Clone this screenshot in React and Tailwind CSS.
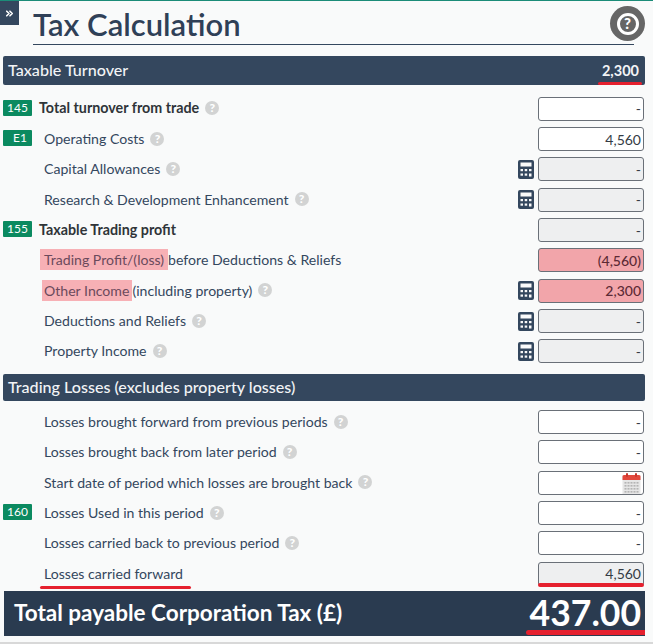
import React from 'react';
import { ChevronsRight } from 'lucide-react';

const Help = () => (
  <span className="inline-flex h-[14px] w-[14px] shrink-0 items-center justify-center rounded-full bg-[#d2d3d3] text-[12px] font-black leading-none text-white">?</span>
);

const Calc = () => (
  <svg width="16" height="19" viewBox="0 0 16 19" className="shrink-0">
    <rect x="0" y="0" width="16" height="19" rx="2" fill="#34475e" />
    <rect x="2.5" y="2.5" width="11" height="4" fill="#fafafa" />
    <g fill="#fafafa">
      <rect x="2.5" y="9" width="2.5" height="2.2" />
      <rect x="6.7" y="9" width="2.5" height="2.2" />
      <rect x="11" y="9" width="2.5" height="2.2" />
      <rect x="2.5" y="13.5" width="2.5" height="2.2" />
      <rect x="6.7" y="13.5" width="2.5" height="2.2" />
      <rect x="11" y="13.5" width="2.5" height="3" />
    </g>
  </svg>
);

const CalendarIcon = () => (
  <svg width="19" height="21" viewBox="0 0 19 21" className="absolute right-[2px] top-[1px]">
    <rect x="0.5" y="2" width="18" height="19" fill="#e6e6e6" />
    <path d="M0.5 3.5 a1.5 1.5 0 0 1 1.5 -1.5 h15 a1.5 1.5 0 0 1 1.5 1.5 V7 H0.5 Z" fill="#e2483d" />
    <rect x="4" y="0" width="2" height="4" rx="1" fill="#c9372c" />
    <rect x="13" y="0" width="2" height="4" rx="1" fill="#c9372c" />
    <g fill="#b4b4b4">
      {[9, 12, 15, 18].map(y => [2.5, 5.5, 8.5, 11.5, 14.5].map(x => (
        <rect key={`${x}-${y}`} x={x} y={y} width="2" height="1.6" />
      )))}
    </g>
  </svg>
);

const Field = ({ value, tone = 'white', calendar, underline }) => {
  const tones = {
    white: 'bg-white text-[#343b44]',
    grey: 'bg-[#eeeff0] text-[#343b44]',
    red: 'bg-[#f2a5aa] font-medium text-[#5c2a35]',
  };
  return (
    <div className={`relative flex h-[24px] w-[106px] items-center justify-end rounded-[3px] border border-[#6a7078] pr-[2px] text-[14px] ${tones[tone]}`}>
      {value}
      {calendar && <CalendarIcon />}
      {underline && <div className="absolute -bottom-[2px] -left-[1px] -right-[1px] h-[4px] rounded-[2px] bg-[#e5202e]" />}
    </div>
  );
};

const Badge = ({ children, right }) => (
  <span className={`flex h-[16px] w-[29px] shrink-0 items-center rounded-[1px] bg-[#0b8a60] text-[12px] text-white ${right ? 'justify-end pr-[5px]' : 'justify-center'}`}>
    {children}
  </span>
);

const Row = ({ badge, badgeRight, bold, label, mark, markWide, help = true, calc, value, tone, calendar, underline, underlineLabel }) => (
  <div className="flex h-[30.35px] items-center">
    <div className="mb-[2px] w-[29px] shrink-0">{badge && <Badge right={badgeRight}>{badge}</Badge>}</div>
    <div className={`relative mb-[1px] flex min-w-0 flex-1 items-center gap-[6px] ${bold ? 'ml-[7px] text-[14.3px] font-bold text-[#2f3438]' : 'ml-[12px] text-[14.1px] text-[#34475e]'}`}>
      <span className="whitespace-nowrap">
        {mark && (
          <span className={`bg-[#f7b0b5] py-[2px] text-[#6b4a5c] ${markWide ? '-ml-[4px] pl-[4px] pr-[4px]' : '-ml-[2px] pl-[2px] pr-[3px]'}`}>{mark}</span>
        )}
        {label}
      </span>
      {help && <Help />}
      {underlineLabel && <div className="absolute -bottom-[5px] -left-[4px] h-[3px] w-[151px] rounded-full bg-[#e5202e]" />}
    </div>
    <div className="mr-[4px] flex items-center">{calc && <Calc />}</div>
    <div className="shrink-0"><Field value={value} tone={tone} calendar={calendar} underline={underline} /></div>
  </div>
);

const SectionBar = ({ title, children, className }) => (
  <div className={`relative flex items-center justify-between rounded-[2px] bg-[#34475e] pl-[5px] pr-[6px] text-[16.1px] font-medium text-[#f2f4f6] ${className}`}>
    <span>{title}</span>
    {children}
  </div>
);

export default function App() {
  return (
    <div className="relative h-[644px] w-[653px] overflow-hidden border-t border-[#1b8c78] bg-[#f9fafa] font-['Lato',sans-serif]">
      <div className="absolute left-0 top-0 flex h-[24px] w-[19px] items-center justify-center bg-[#34475e] text-white">
        <ChevronsRight size={11} strokeWidth={3.5} />
      </div>

      <div className="ml-[33px] mr-[19px] flex h-[44px] items-end justify-between border-b-[1.5px] border-[#34475e]">
        <h1 className="text-[31px] font-semibold leading-[40px] text-[#2f4057]">Tax Calculation</h1>
      </div>
      <div className="absolute right-[8px] top-[5px] flex h-[35px] w-[35px] items-center justify-center rounded-full bg-[#666666]">
        <span className="flex h-[22px] w-[22px] items-center justify-center rounded-full border-[3px] border-white text-[15px] font-black leading-none text-white">?</span>
      </div>

      <div className="ml-[3px] mr-[8px] mt-[11px]">
        <SectionBar title="Taxable Turnover" className="h-[29px]">
          <span className="text-[14.5px] font-bold">2,300</span>
          <div className="absolute bottom-0 right-[3px] h-[3px] w-[44px] rounded-full bg-[#e5202e]" />
        </SectionBar>

        <div className="mt-[8.5px] pr-[1px]">
          <Row badge="145" bold label="Total turnover from trade" value="-" />
          <Row badge="E1" badgeRight label="Operating Costs" value="4,560" />
          <Row label="Capital Allowances" calc value="-" tone="grey" />
          <Row label="Research & Development Enhancement" calc value="-" tone="grey" />
          <Row badge="155" bold label="Taxable Trading profit" help={false} value="-" tone="grey" />
          <Row mark="Trading Profit/(loss)" markWide label="before Deductions & Reliefs" help={false} value="(4,560)" tone="red" />
          <Row mark="Other Income" label="(including property)" calc value="2,300" tone="red" />
          <Row label="Deductions and Reliefs" calc value="-" tone="grey" />
          <Row label="Property Income" calc value="-" tone="grey" />
        </div>

        <SectionBar title="Trading Losses (excludes property losses)" className="mt-[7.35px] h-[27px]" />

        <div className="mt-[6px] pr-[1px]">
          <Row label="Losses brought forward from previous periods" value="-" />
          <Row label="Losses brought back from later period" value="-" />
          <Row label="Start date of period which losses are brought back" calendar />
          <Row badge="160" label="Losses Used in this period" value="-" />
          <Row label="Losses carried back to previous period" value="-" />
          <Row label="Losses carried forward" help={false} underlineLabel value="4,560" tone="grey" underline />
        </div>

        <div className="relative ml-[1px] mt-[2px] flex h-[45px] items-center justify-between bg-[#2a3b50] pb-[2px] pl-[10px] pr-[4px] text-white">
          <span className="text-[22.5px] font-bold">Total payable Corporation Tax (£)</span>
          <span className="text-[35.5px] font-bold leading-none">437.00</span>
          <div className="absolute bottom-[1px] right-0 h-[5px] w-[119px] rounded-l-full bg-[#e5202e]" />
        </div>
      </div>
      <div className="absolute bottom-0 left-0 h-[2px] w-full bg-[#d8d8d8]" />
    </div>
  );
}
